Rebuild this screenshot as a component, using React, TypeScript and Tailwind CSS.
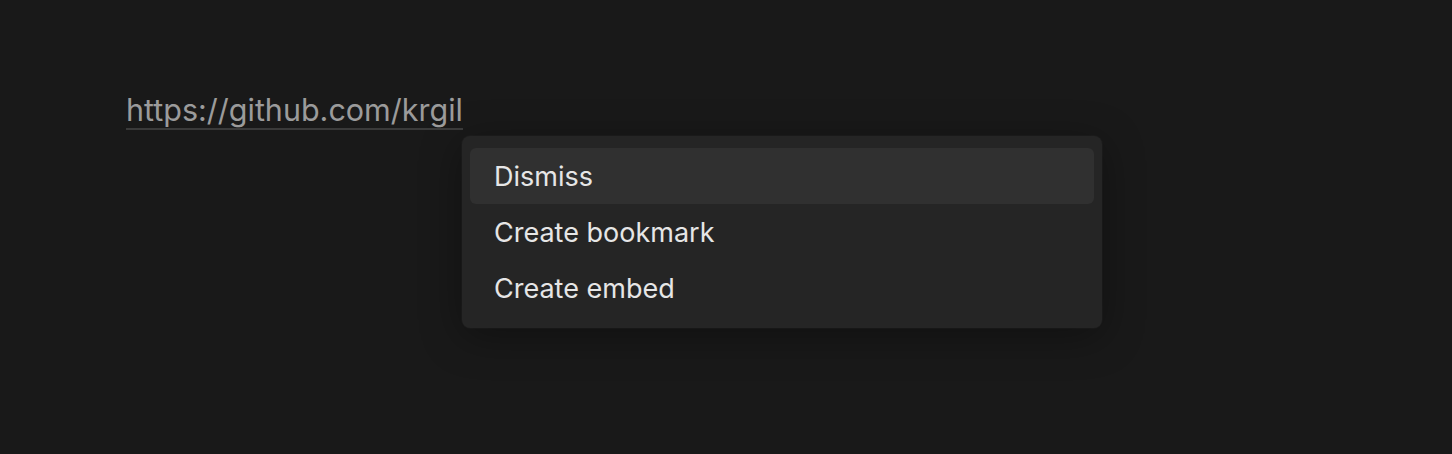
const items = ['Dismiss', 'Create bookmark', 'Create embed']

export default function App() {
  return (
    <div
      className="w-[1452px] h-[454px] bg-[#191919] pt-[92px] pl-[126px]"
      style={{ fontFamily: 'Inter, "Noto Sans", sans-serif' }}
    >
      <div className="flex items-start">
        <span className="text-[30.5px] leading-[36px] text-[#9b9b9b] border-b-2 border-[#3a3a3a]">
          https://github.com/krgil
        </span>
      </div>
      <div className="ml-[336px] mt-[6px] w-[640px] rounded-[8px] bg-[#252525] px-[8px] py-[12px] shadow-[0_0_0_1px_rgba(255,255,255,0.02),0_8px_40px_rgba(0,0,0,0.35)]">
        {items.map((item, i) => (
          <div
            key={item}
            className={`h-[56px] flex items-center pl-[24px] pt-[2px] rounded-[6px] text-[27px] text-[#e6e6e6] ${
              i === 0 ? 'bg-[#303030]' : ''
            }`}
          >
            {item}
          </div>
        ))}
      </div>
    </div>
  )
}
